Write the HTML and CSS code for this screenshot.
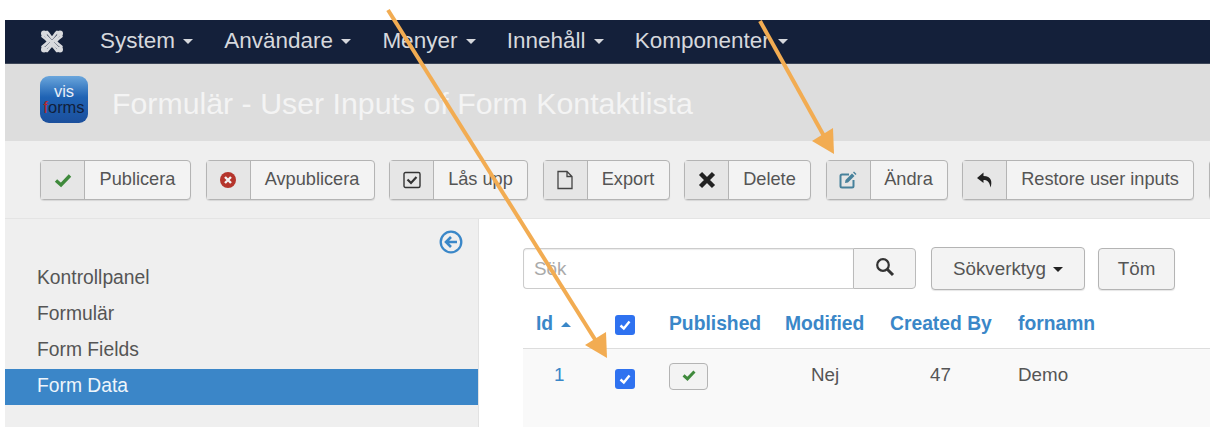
FILE: index.html
```html
<!DOCTYPE html>
<html>
<head>
  <meta charset="utf-8">
  <title>Formulär - User Inputs of Form Kontaktlista</title>
  <link rel="stylesheet" href="styles.css">
</head>
<body>
<div class="app">
  <nav class="navbar">
    <svg class="brand" width="26" height="26" viewBox="0 0 26 26">
      <g fill="none" stroke="#d9dade" stroke-width="2.600" stroke-linecap="round">
        <path d="M6 7 L19 20"/>
        <path d="M20 7 L7 20"/>
        <path d="M8 4 C10 6 11 8 13 10 C15 8 16 6 18 4"/>
        <path d="M8 23 C10 21 11 19 13 17 C15 19 16 21 18 23"/>
        <path d="M3.500 8.500 C6 10 8 12 9.500 13.500 C8 15 6 17 3.500 18.500"/>
        <path d="M22.500 8.500 C20 10 18 12 16.500 13.500 C18 15 20 17 22.500 18.500"/>
      </g>
      <circle cx="5" cy="5.500" r="3" fill="#d9dade"/>
      <circle cx="21" cy="5.500" r="3" fill="#d9dade"/>
      <circle cx="5" cy="21.500" r="3" fill="#d9dade"/>
      <circle cx="21" cy="21.500" r="3" fill="#d9dade"/>
    </svg>
    <a class="nav-item">System <span class="caret"></span></a>
    <a class="nav-item">Användare <span class="caret"></span></a>
    <a class="nav-item">Menyer <span class="caret"></span></a>
    <a class="nav-item">Innehåll <span class="caret"></span></a>
    <a class="nav-item">Komponenter <span class="caret"></span></a>
  </nav>

  <header class="page-header">
    <div class="logo"><span class="logo-vis">vis</span><span class="logo-forms"><b>f</b>orms</span></div>
    <h1>Formulär - User Inputs of Form Kontaktlista</h1>
  </header>

  <div class="toolbar">
    <button class="tool tool-publish"><span class="tool-icon">
      <svg width="18" height="18" viewBox="0 0 18 18"><path d="M2 9.500 L7 14 L16 4.500" fill="none" stroke="#3f8a3c" stroke-width="3.400"/></svg>
    </span><span class="tool-label">Publicera</span></button>
    <button class="tool tool-unpublish"><span class="tool-icon">
      <svg width="18" height="18" viewBox="0 0 18 18"><circle cx="9" cy="9" r="8" fill="#b5352c"/><path d="M6 6 L12 12 M12 6 L6 12" stroke="#f3f3f3" stroke-width="2.400"/></svg>
    </span><span class="tool-label">Avpublicera</span></button>
    <button class="tool tool-unlock"><span class="tool-icon">
      <svg width="18" height="18" viewBox="0 0 18 18"><rect x="1" y="1.500" width="16" height="15" rx="1.500" fill="none" stroke="#333" stroke-width="1.400"/><path d="M4.500 8.500 L8 12 L13.500 6" fill="none" stroke="#333" stroke-width="2.200"/></svg>
    </span><span class="tool-label">Lås upp</span></button>
    <button class="tool tool-export"><span class="tool-icon">
      <svg width="18" height="20" viewBox="0 0 18 20"><path d="M2 1.500 H11 L16 6.500 V18.500 H2 Z M11 1.500 V6.500 H16" fill="none" stroke="#444" stroke-width="1.300"/></svg>
    </span><span class="tool-label">Export</span></button>
    <button class="tool tool-delete"><span class="tool-icon">
      <svg width="20" height="20" viewBox="0 0 20 20"><path d="M3.500 3.500 L16.500 16.500 M16.500 3.500 L3.500 16.500" stroke="#222" stroke-width="4.400"/></svg>
    </span><span class="tool-label">Delete</span></button>
    <button class="tool tool-edit"><span class="tool-icon">
      <svg width="18" height="18" viewBox="0 0 18 18"><path d="M10 3.500 H3 Q1.500 3.500 1.500 5 V15 Q1.500 16.500 3 16.500 H13 Q14.500 16.500 14.500 15 V9" fill="none" stroke="#47819b" stroke-width="2"/><path d="M6.500 9 L13 2.500 L15.500 5 L9 11.500 L6 12 Z" fill="#47819b"/><path d="M14 1.500 L15 .5 L17.500 3 L16.500 4 Z" fill="#47819b"/></svg>
    </span><span class="tool-label">Ändra</span></button>
    <button class="tool tool-restore"><span class="tool-icon">
      <svg width="18" height="18" viewBox="0 0 18 18"><path d="M7.500 1.500 L1 7 L7.500 12 V9 C11 9 13.500 10.500 14.500 16.500 C16.500 11 15.500 5 7.500 5 Z" fill="#222"/></svg>
    </span><span class="tool-label">Restore user inputs</span></button>
    <button class="tool tool-cut"></button>
  </div>

  <div class="main">
    <aside class="sidebar">
      <div class="toggle-row">
        <svg width="24" height="24" viewBox="0 0 24 24"><circle cx="12" cy="12" r="10.300" fill="none" stroke="#3a87c8" stroke-width="2.300"/><path d="M18 12 H8 M12 7 L7 12 L12 17" fill="none" stroke="#3a87c8" stroke-width="2.600"/></svg>
      </div>
      <ul class="side-menu">
        <li>Kontrollpanel</li>
        <li>Formulär</li>
        <li>Form Fields</li>
        <li class="active">Form Data</li>
      </ul>
    </aside>

    <section class="content">
      <div class="filters">
        <div class="search">
          <input class="search-input" type="text" placeholder="Sök">
          <button class="search-btn">
            <svg width="20" height="20" viewBox="0 0 20 20"><circle cx="8" cy="8" r="5.800" fill="none" stroke="#333" stroke-width="2.200"/><path d="M12.500 12.500 L18 18" stroke="#333" stroke-width="3"/></svg>
          </button>
        </div>
        <button class="btn btn-tools">Sökverktyg <span class="caret caret-dark"></span></button>
        <button class="btn btn-clear">Töm</button>
      </div>

      <div class="grid-row grid-head">
        <a class="col-id">Id <span class="caret caret-up"></span></a>
        <span class="check"><svg width="14" height="14" viewBox="0 0 14 14"><path d="M2.500 7.500 L5.800 10.500 L11.500 3.500" fill="none" stroke="#fff" stroke-width="2.400"/></svg></span>
        <a>Published</a>
        <a>Modified</a>
        <a>Created By</a>
        <a>fornamn</a>
      </div>
      <div class="grid-row grid-body">
        <a class="col-id cell-id">1</a>
        <span class="check"><svg width="14" height="14" viewBox="0 0 14 14"><path d="M2.500 7.500 L5.800 10.500 L11.500 3.500" fill="none" stroke="#fff" stroke-width="2.400"/></svg></span>
        <span><button class="state-btn"><svg width="14" height="14" viewBox="0 0 18 18"><path d="M2 9.500 L7 14 L16 4.500" fill="none" stroke="#3f8a3c" stroke-width="3.800"/></svg></button></span>
        <span class="cell-modified">Nej</span>
        <span class="cell-created">47</span>
        <span>Demo</span>
      </div>
    </section>
  </div>
</div>

<!-- annotation arrows drawn on top of the screenshot -->
<svg class="arrows" width="1216" height="440" viewBox="0 0 1216 440">
  <path d="M388 10 L596 341" stroke="#f2ac52" stroke-width="4" fill="none"/>
  <path d="M607 358 L585 345 L606 332 Z" fill="#f2ac52"/>
  <path d="M760 21 L824 136" stroke="#f2ac52" stroke-width="4" fill="none"/>
  <path d="M834 154 L812 141 L833 128 Z" fill="#f2ac52"/>
</svg>
</body>
</html>
```

FILE: styles.css
```css
* {
  box-sizing: border-box;
}
body {
  margin: 0;
  background: #fff;
  font-family: "Liberation Sans", Arial, sans-serif;
  font-size: 18.800px;
  color: #555;
  overflow: hidden;
}
.app {
  width: 1205px;
  height: 407px;
  margin: 20px 0 0 5px;
  overflow: hidden;
}
.arrows {
  position: absolute;
  top: 0;
  left: 0;
  pointer-events: none;
}

/* top bar */
.navbar {
  height: 44px;
  background: #14203a;
  border-bottom: 1px solid #3d4658;
  display: flex;
  align-items: center;
  padding: 0 0 2px 34px;
  color: #d6d8dd;
  font-size: 22.500px;
}
.brand {
  margin-right: 35px;
}
.nav-item {
  margin-right: 31px;
  white-space: nowrap;
}
.caret {
  display: inline-block;
  width: 0;
  height: 0;
  margin-left: 2px;
  vertical-align: middle;
  border-top: 5px solid #d6d8dd;
  border-left: 5px solid transparent;
  border-right: 5px solid transparent;
}
.caret-dark {
  border-top-color: #222;
}
.caret-up {
  border-top: 0;
  border-bottom: 5px solid #3a87c8;
  vertical-align: 3px;
}

/* title strip */
.page-header {
  height: 77px;
  background: #ddd;
  display: flex;
  align-items: center;
  padding-left: 35px;
}
.page-header h1 {
  margin: 0 0 0 24px;
  padding-top: 2px;
  font-size: 30.300px;
  font-weight: normal;
  color: #f4f4f4;
}
.logo {
  width: 48px;
  height: 47px;
  margin-bottom: 7px;
  border-radius: 9px;
  background: linear-gradient(#6aa6dc, #1f63b4 45%, #1b4f9c);
  display: flex;
  flex-direction: column;
  align-items: center;
  justify-content: center;
  line-height: 16px;
  font-size: 16.500px;
}
.logo-vis {
  color: #e8eef8;
}
.logo-forms {
  color: #11203c;
}
.logo-forms b {
  color: #b4262a;
  font-weight: normal;
}

/* toolbar */
.toolbar {
  height: 78px;
  background: #efefef;
  border-bottom: 1px solid #e4e4e4;
  display: flex;
  align-items: center;
  gap: 14.500px;
  padding-left: 35px;
}
.tool {
  flex: none;
  height: 40px;
  padding: 0;
  display: flex;
  align-items: stretch;
  background: #f3f3f3;
  border: 1px solid #b4b4b4;
  border-radius: 4px;
  font-family: inherit;
  font-size: 18.200px;
  color: #555;
  box-shadow: 0 1px 1px rgba(0, 0, 0, 0.1);
}
.tool-icon {
  flex: none;
  width: 44px;
  background: #e6e6e6;
  border-right: 1px solid #b4b4b4;
  display: flex;
  align-items: center;
  justify-content: center;
}
.tool-label {
  flex: 1;
  align-self: center;
  text-align: center;
  white-space: nowrap;
}
.tool-publish { width: 151px; }
.tool-unpublish { width: 169px; }
.tool-unlock { width: 139px; }
.tool-export { width: 127px; }
.tool-delete { width: 127px; }
.tool-edit { width: 122px; }
.tool-restore { width: 232px; }
.tool-cut { width: 40px; }

/* below the toolbar */
.main {
  display: flex;
  height: 208px;
}
.sidebar {
  width: 474px;
  flex: none;
  background: #efefef;
  border-right: 1px solid #e2e2e2;
  padding-top: 11px;
}
.toggle-row {
  display: flex;
  justify-content: flex-end;
  padding-right: 15px;
  height: 24px;
}
.side-menu {
  list-style: none;
  margin: 7px 0 0;
  padding: 0;
}
.side-menu li {
  height: 36px;
  line-height: 34px;
  padding-left: 32px;
  font-size: 19.300px;
}
.side-menu .active {
  background: #3b86c8;
  color: #eef5fb;
}

.content {
  flex: 1;
  padding: 28px 0 0 44px;
}
.filters {
  display: flex;
  align-items: center;
  height: 43px;
}
.search {
  display: flex;
  width: 393px;
  height: 41px;
  margin-right: 15px;
}
.search-input {
  width: 330px;
  border: 1px solid #ccc;
  border-right: 0;
  border-radius: 4px 0 0 4px;
  padding: 0 10px;
  font: inherit;
  background: #fff;
  box-shadow: inset 0 1px 1px rgba(0, 0, 0, 0.08);
}
.search-input::placeholder {
  color: #aaa;
}
.search-btn {
  flex: 1;
  padding: 0;
  background: #f3f3f3;
  border: 1px solid #bbb;
  border-radius: 0 4px 4px 0;
}
.btn {
  height: 43px;
  padding: 0;
  background: #f3f3f3;
  border: 1px solid #b4b4b4;
  border-radius: 4px;
  font: inherit;
  color: #555;
  box-shadow: 0 1px 1px rgba(0, 0, 0, 0.1);
}
.btn-tools {
  width: 154px;
  margin-right: 13px;
}
.btn-clear {
  width: 77px;
  height: 42px;
}

.grid-row {
  display: grid;
  grid-template-columns: 79px 54px 116px 105px 128px 1fr;
  padding-left: 13px;
  align-items: start;
}
.grid-head {
  height: 47px;
  margin-top: 12px;
  padding-top: 11px;
  border-bottom: 1px solid #ddd;
  color: #3a87c8;
  font-size: 19.300px;
  font-weight: bold;
}
.grid-body {
  height: 80px;
  padding-top: 15px;
  background: #f9f9f9;
}
.check {
  width: 20px;
  height: 20px;
  margin-top: 2px;
  border-radius: 3px;
  background: #2f72f0;
  display: flex;
  align-items: center;
  justify-content: center;
}
.grid-body .check {
  margin-top: 5px;
}
.cell-id {
  color: #3a87c8;
  padding-left: 18px;
}
.state-btn {
  width: 39px;
  height: 27px;
  padding: 0;
  margin-top: -1px;
  background: #f3f3f3;
  border: 1px solid #b4b4b4;
  border-radius: 4px;
}
.cell-modified {
  padding-left: 26px;
}
.cell-created {
  padding-left: 40px;
}
```
